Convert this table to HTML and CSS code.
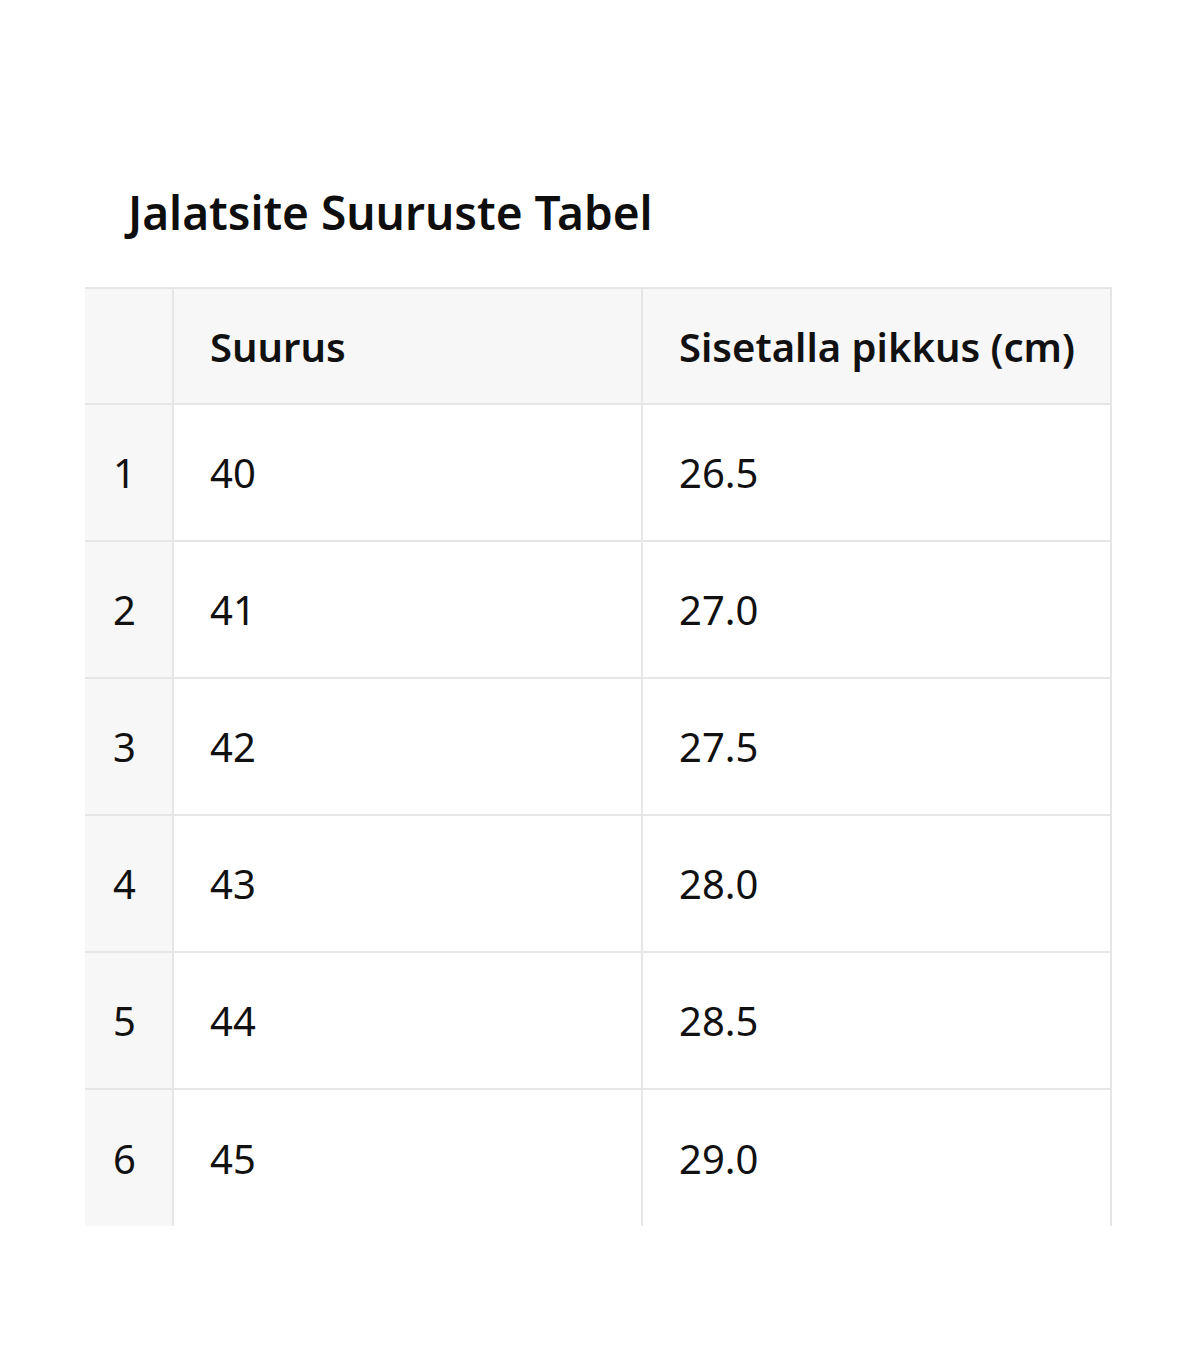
FILE: index.html
```html
<!DOCTYPE html>
<html lang="et">
<head>
<meta charset="utf-8">
<title>Jalatsite Suuruste Tabel</title>
<link rel="stylesheet" href="styles.css">
</head>
<body>
<main class="page">
  <h1 class="title">Jalatsite Suuruste Tabel</h1>
  <table class="sizes">
    <colgroup>
      <col class="col-idx">
      <col class="col-data">
      <col class="col-data">
    </colgroup>
    <thead>
      <tr><th class="idx"></th><th>Suurus</th><th>Sisetalla pikkus (cm)</th></tr>
    </thead>
    <tbody>
      <tr><td class="idx">1</td><td>40</td><td>26.5</td></tr>
      <tr><td class="idx">2</td><td>41</td><td>27.0</td></tr>
      <tr><td class="idx">3</td><td>42</td><td>27.5</td></tr>
      <tr><td class="idx">4</td><td>43</td><td>28.0</td></tr>
      <tr><td class="idx">5</td><td>44</td><td>28.5</td></tr>
      <tr><td class="idx">6</td><td>45</td><td>29.0</td></tr>
    </tbody>
  </table>
</main>
</body>
</html>
```
FILE: styles.css
```css
html, body {
  margin: 0;
  padding: 0;
  background: #ffffff;
}
body {
  font-family: "Noto Sans", "Open Sans", sans-serif;
  color: #111111;
}
.page {
  padding: 180px 0 0 85px;
}
.title {
  margin: 0 0 43px 43px;
  font-size: 46px;
  font-weight: 600;
  line-height: 64px;
  color: #0e0e0e;
}
.sizes {
  border-collapse: collapse;
  width: 1027px;
  table-layout: fixed;
  font-size: 40px;
}
.col-idx {
  width: 88px;
}
.col-data {
  width: 469px;
}
.sizes th, .sizes td {
  box-sizing: border-box;
  border: 2px solid #e6e6e6;
  text-align: left;
  vertical-align: middle;
  padding: 0 0 0 36px;
  white-space: nowrap;
}
.sizes th {
  height: 116px;
  background: #f7f7f7;
  font-weight: 600;
  font-size: 40px;
}
.sizes td {
  height: 137px;
  font-weight: 400;
}
.sizes th:first-child, .sizes td:first-child {
  border-left: none;
}
.sizes tbody tr:last-child td {
  border-bottom: none;
}
.sizes .idx {
  background: #f7f7f7;
  padding: 0 0 0 28px;
}
```
